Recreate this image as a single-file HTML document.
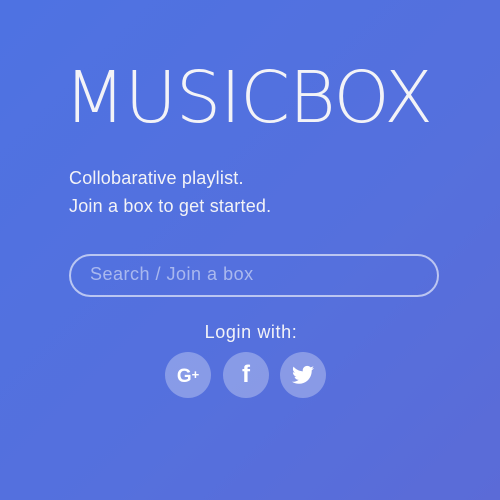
<!DOCTYPE html>
<html><head><style>
html,body{margin:0;padding:0}
body{width:500px;height:500px;overflow:hidden;background:linear-gradient(135deg,#4e72e2 0%,#5570dd 60%,#5b6bd7 100%);font-family:"DejaVu Sans","Liberation Sans",sans-serif;color:#f3f3f7;position:relative}
.t{position:absolute;left:64px;top:58px;font-size:71px;font-weight:200;line-height:80px;white-space:nowrap;transform-origin:left top;letter-spacing:-1px}
.s{position:absolute;left:69px;top:164px;font-size:18px;line-height:28px;letter-spacing:.2px;font-family:"Liberation Sans",sans-serif}
.b{position:absolute;left:69px;top:254px;width:366px;height:39px;border:2px solid rgba(255,255,255,.6);border-radius:22px}
.b span{position:absolute;left:19px;top:8px;font-size:18px;letter-spacing:.5px;color:rgba(255,255,255,.5);font-family:"Liberation Sans",sans-serif}
.l{position:absolute;left:0;width:502px;text-align:center;top:322px;font-size:18px;letter-spacing:.6px;font-family:"Liberation Sans",sans-serif}
.c{position:absolute;top:352px;width:46px;height:46px;border-radius:50%;background:rgba(255,255,255,.3);color:#fff;font-family:"Liberation Sans",sans-serif;font-weight:bold;text-align:center;line-height:46px}
</style></head><body>
<div class="t" id="t">MUSICBOX</div>
<div class="s">Collobarative playlist.<br>Join a box to get started.</div>
<div class="b"><span>Search / Join a box</span></div>
<div class="l">Login with:</div>
<div class="c" style="left:165px;font-size:19px">G<span style="font-size:13px;vertical-align:3px">+</span></div>
<div class="c" style="left:223px;font-size:24px">f</div>
<div class="c" style="left:280px"><svg width="22" height="20" viewBox="0 0 24 20" style="margin-top:13px"><path fill="#fff" d="M24 2.4c-.9.4-1.8.6-2.8.8 1-.6 1.8-1.6 2.2-2.7-1 .6-2 1-3.1 1.2C19.3.7 18 0 16.6 0c-2.7 0-4.9 2.2-4.9 4.9 0 .4 0 .8.1 1.1C7.7 5.8 4.1 3.9 1.7.9c-.4.7-.7 1.6-.7 2.5 0 1.7.9 3.2 2.2 4.1-.8 0-1.6-.2-2.2-.6v.1c0 2.4 1.7 4.4 3.9 4.8-.4.1-.8.2-1.3.2-.3 0-.6 0-.9-.1.6 2 2.4 3.4 4.6 3.4-1.7 1.3-3.8 2.1-6.1 2.1H0c2.2 1.4 4.8 2.2 7.5 2.2 9.1 0 14-7.5 14-14v-.6c1-.7 1.8-1.6 2.5-2.6z"/></svg></div>
<script>var t=document.getElementById('t');t.style.transform='scaleX('+(368/t.offsetWidth)+')';</script>
</body></html>
